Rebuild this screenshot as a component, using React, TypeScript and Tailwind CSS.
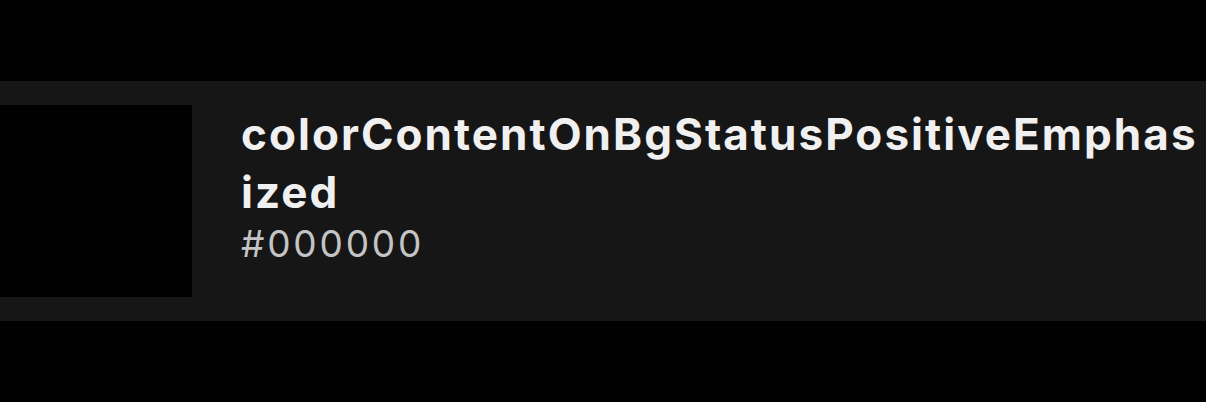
export default function App() {
  return (
    <div className="h-[402px] w-[1206px] overflow-hidden bg-black pt-[81px]" style={{ fontFamily: 'Inter, "Noto Sans", sans-serif' }}>
      <div className="flex h-[240px] items-start gap-[49px] bg-[#161616] py-6">
        <div className="size-[192px] shrink-0 bg-black" />
        <div className="min-w-0 flex-1 pt-px">
          <div className="break-all text-[44px] font-bold leading-[57.5px] tracking-[2.05px] text-[#f0f0f0]">
            colorContentOnBgStatusPositiveEmphasized
          </div>
          <div className="text-[37px] leading-[46px] tracking-[2.8px] text-[#c4c4c4]">#000000</div>
        </div>
      </div>
    </div>
  );
}
